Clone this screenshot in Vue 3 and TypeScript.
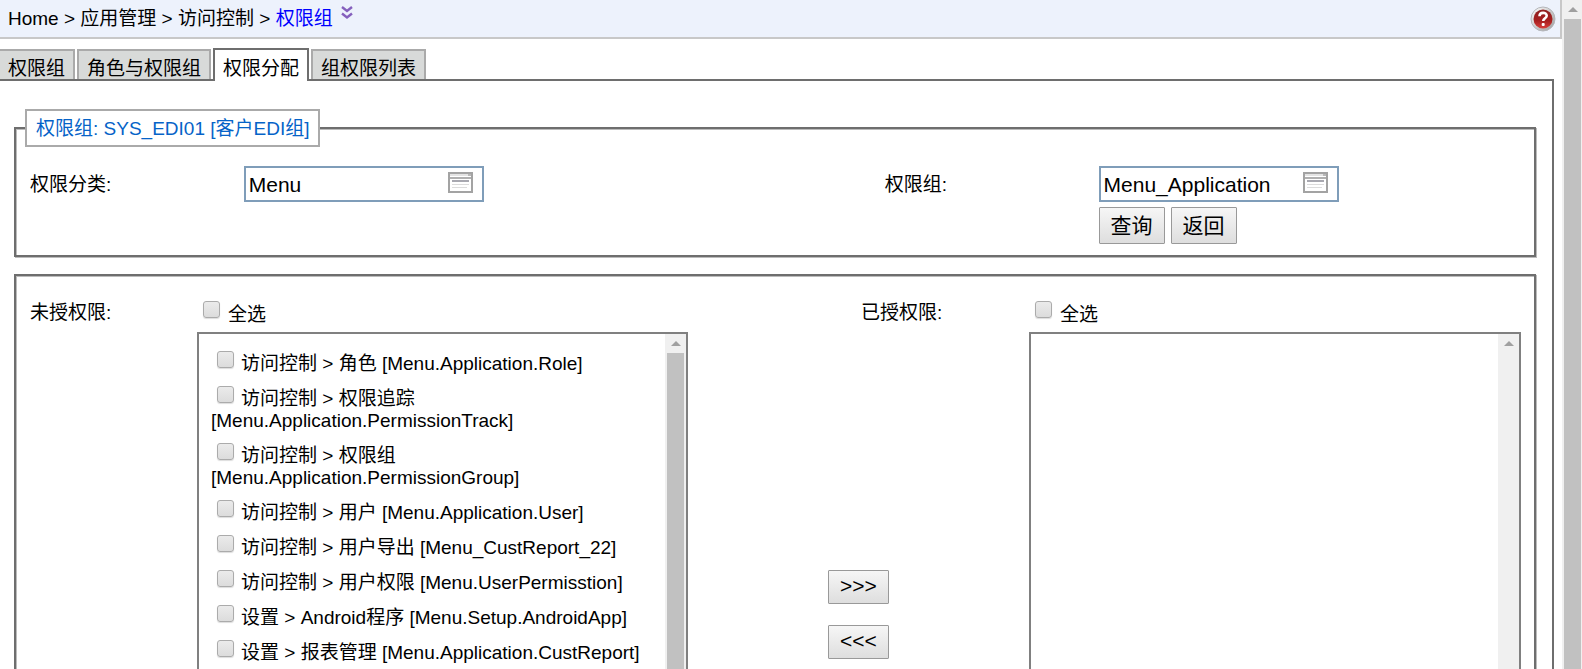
<script setup lang="ts">
import { ref } from 'vue'

interface Permission {
  path: string
  code: string
}

const tabs = ['权限组', '角色与权限组', '权限分配', '组权限列表']
const activeTab = ref('权限分配')
const category = ref('Menu')
const group = ref('Menu_Application')
const checked = ref<string[]>([])

const available: Permission[] = [
  { path: '访问控制 > 角色', code: 'Menu.Application.Role' },
  { path: '访问控制 > 权限追踪', code: 'Menu.Application.PermissionTrack' },
  { path: '访问控制 > 权限组', code: 'Menu.Application.PermissionGroup' },
  { path: '访问控制 > 用户', code: 'Menu.Application.User' },
  { path: '访问控制 > 用户导出', code: 'Menu_CustReport_22' },
  { path: '访问控制 > 用户权限', code: 'Menu.UserPermisstion' },
  { path: '设置 > Android程序', code: 'Menu.Setup.AndroidApp' },
  { path: '设置 > 报表管理', code: 'Menu.Application.CustReport' },
]
</script>

<template>
  <div class="page">
    <div class="view">
      <header class="topbar">
        <nav class="crumbs">
          <span>Home &gt; 应用管理 &gt; 访问控制 &gt; <a href="#">权限组</a></span>
          <button class="more" type="button" aria-label="展开">
            <svg width="12" height="14" viewBox="0 0 12 14" fill="none" stroke="#8560bd" stroke-width="2.400">
              <path d="M1 1l5 4L11 1M1 7.500l5 4 5-4" />
            </svg>
          </button>
        </nav>
        <button class="help" type="button" aria-label="帮助">
          <svg width="26" height="26" viewBox="0 0 26 26">
            <defs>
              <linearGradient id="rim" x1="0" y1="0" x2="1" y2="1">
                <stop offset="0" stop-color="#ffffff" />
                <stop offset="1" stop-color="#9a9a9a" />
              </linearGradient>
              <linearGradient id="disc" x1="0" y1="0" x2="0" y2="1">
                <stop offset="0" stop-color="#8e1f1f" />
                <stop offset="0.6" stop-color="#a82020" />
                <stop offset="1" stop-color="#d9403c" />
              </linearGradient>
            </defs>
            <circle cx="13" cy="13" r="12" fill="url(#rim)" stroke="#b4b6ba" />
            <circle cx="13" cy="13" r="9.500" fill="url(#disc)" />
            <path d="M9.500 10.300c0-4.600 7.200-4.400 7.200-.6 0 2.500-3.500 2.500-3.500 5.300" fill="none" stroke="#fff" stroke-width="2.600" />
            <rect x="11.700" y="17" width="3" height="3" rx="1" fill="#fff" />
          </svg>
        </button>
      </header>

      <nav class="tabs">
        <button
          v-for="tab in tabs"
          :key="tab"
          type="button"
          class="tab"
          :class="{ active: tab === activeTab }"
          @click="activeTab = tab"
        >{{ tab }}</button>
      </nav>

      <main class="content">
        <fieldset class="panel search">
          <legend>权限组: SYS_EDI01 [客户EDI组]</legend>
          <div class="form">
            <label for="category">权限分类:</label>
            <div class="cell">
              <div class="picker">
                <input id="category" v-model="category" type="text" />
                <button type="button" aria-label="选择权限分类">
                  <svg width="25" height="21" viewBox="0 0 25 21" fill="none">
                    <rect x="1" y="1" width="23" height="19" fill="#fff" stroke="#a3a3a3" stroke-width="2" />
                    <path d="M2 3h21" stroke="#e4e4e4" stroke-width="2" />
                    <path d="M2 6h21" stroke="#b0b0b0" stroke-width="2" />
                    <path d="M20 3h3" stroke="#b8b8b8" stroke-width="2" />
                    <path d="M4 9h17" stroke="#a8a8b0" stroke-width="2" />
                    <path d="M4 12.500h17M4 15.500h15" stroke="#dcdcdc" />
                  </svg>
                </button>
              </div>
            </div>
            <label for="group">权限组:</label>
            <div class="cell">
              <div class="picker">
                <input id="group" v-model="group" type="text" />
                <button type="button" aria-label="选择权限组">
                  <svg width="25" height="21" viewBox="0 0 25 21" fill="none">
                    <rect x="1" y="1" width="23" height="19" fill="#fff" stroke="#a3a3a3" stroke-width="2" />
                    <path d="M2 3h21" stroke="#e4e4e4" stroke-width="2" />
                    <path d="M2 6h21" stroke="#b0b0b0" stroke-width="2" />
                    <path d="M20 3h3" stroke="#b8b8b8" stroke-width="2" />
                    <path d="M4 9h17" stroke="#a8a8b0" stroke-width="2" />
                    <path d="M4 12.500h17M4 15.500h15" stroke="#dcdcdc" />
                  </svg>
                </button>
              </div>
              <div class="actions">
                <button class="btn" type="button">查询</button>
                <button class="btn" type="button">返回</button>
              </div>
            </div>
          </div>
        </fieldset>

        <section class="panel assign">
          <span class="side">未授权限:</span>
          <div class="column">
            <label class="all"><input type="checkbox" /><span>全选</span></label>
            <div class="listbox">
              <ul>
                <li v-for="item in available" :key="item.code">
                  <label><input v-model="checked" type="checkbox" :value="item.code" />{{ item.path }} [{{ item.code }}]</label>
                </li>
              </ul>
              <div class="scrollbar">
                <i class="arrow"></i>
                <div class="thumb"></div>
              </div>
            </div>
          </div>
          <div class="moves">
            <button class="btn move" type="button">&gt;&gt;&gt;</button>
            <button class="btn move" type="button">&lt;&lt;&lt;</button>
          </div>
          <span class="side granted">已授权限:</span>
          <div class="column">
            <label class="all"><input type="checkbox" /><span>全选</span></label>
            <div class="listbox">
              <ul></ul>
              <div class="scrollbar">
                <i class="arrow"></i>
              </div>
            </div>
          </div>
        </section>
      </main>
    </div>
    <div class="scrollbar">
      <i class="arrow"></i>
      <div class="thumb"></div>
    </div>
  </div>
</template>

<style>
body {
  margin: 0;
  background: #fff;
}
</style>

<style scoped>
* {
  box-sizing: border-box;
}
.page {
  display: flex;
  height: 100vh;
  overflow: hidden;
  color: #000;
  font: 400 19px/22px "Liberation Sans", Arial, "Noto Sans CJK SC", sans-serif;
}
.view {
  flex: 1;
  min-width: 0;
  overflow: hidden;
}
button {
  font-family: inherit;
  font-weight: inherit;
  color: inherit;
  cursor: pointer;
}
.topbar {
  display: flex;
  align-items: center;
  justify-content: space-between;
  height: 39px;
  padding: 0 4px 0 8px;
  background: #edf2fc;
  border: solid #c8c8c8;
  border-width: 0 2px 2px 0;
}
.crumbs {
  display: flex;
  align-items: flex-start;
  gap: 8px;
  line-height: 26px;
}
.crumbs a {
  color: #00f;
  text-decoration: none;
}
.more,
.help,
.picker button {
  display: flex;
  padding: 0;
  border: 0;
  background: none;
}
.tabs {
  display: flex;
  align-items: flex-end;
  gap: 2px;
  height: 33px;
  margin: 9px 8px 0 0;
  border-bottom: 2px solid #6e6e6e;
}
.tab {
  height: 30px;
  padding: 7px 8px 0;
  border: solid #aaa;
  border-width: 2px 2px 0;
  background: #d8dad9;
  font-size: 19px;
  line-height: 22px;
  white-space: nowrap;
}
.tab:first-child {
  border-left: 0;
}
.tab.active {
  height: 33px;
  margin-bottom: -2px;
  border-color: #6e6e6e;
  background: #fff;
}
.content {
  margin-right: 8px;
  padding: 28px 16px 0 14px;
  border-right: 2px solid #6e6e6e;
}
.panel {
  min-width: 0;
  margin: 0;
  border: 2px solid #6e6e6e;
  box-shadow: 1px 1px 0 #bbb, inset 1px 1px 0 #bbb;
}
.search {
  padding: 19px 8px 11px 14px;
}
legend {
  margin-left: -5px;
  padding: 7px 9px 5px;
  border: 2px solid #aaa;
  background: #fff;
  color: #0563c8;
}
.form {
  display: grid;
  grid-template-columns: 1fr 3fr 1fr 2fr;
}
.form > label {
  padding-top: 8px;
}
.picker {
  display: flex;
  width: 240px;
  height: 36px;
  padding-right: 9px;
  border: 2px solid #7f9db9;
}
.picker input {
  flex: 1;
  min-width: 0;
  padding: 1px 3px 0;
  border: 0;
  outline: 0;
  background: none;
  color: #000;
  font: 21px "Liberation Sans", Arial, sans-serif;
}
.picker button {
  padding-top: 4px;
}
.actions {
  display: flex;
  gap: 6px;
  margin-top: 5px;
}
.btn {
  height: 37px;
  padding: 0 11px;
  border: 1px solid #999;
  border-radius: 1px;
  background: linear-gradient(#f6f6f6, #dedede);
  font-size: 21px;
  line-height: 33px;
}
.assign {
  display: grid;
  grid-template-columns: 167fr 491fr 173fr 168fr 492fr;
  margin-top: 17px;
  padding: 25px 13px 14px 14px;
}
.side {
  padding-top: 1px;
}
.granted {
  grid-area: 1 / 4;
  align-self: start;
}
.column {
  min-width: 0;
}
.all {
  display: flex;
  align-items: flex-start;
  gap: 8px;
  height: 31px;
  padding-left: 6px;
}
.all span {
  padding-top: 3px;
}
input[type='checkbox'] {
  appearance: none;
  width: 17px;
  height: 17px;
  margin: 0;
  border: 1px solid #ababab;
  border-radius: 3px;
  background: linear-gradient(#ebebeb, #dcdcdc);
  box-shadow: 0 1px 1px #ddd;
}
input[type='checkbox']:checked {
  background: #6e6e6e;
}
.listbox {
  display: flex;
  height: 480px;
  border: 2px solid #808080;
}
ul {
  flex: 1;
  min-width: 0;
  margin: 0;
  padding: 12px;
  list-style: none;
}
li {
  padding: 5px 0 6px;
}
li input[type='checkbox'] {
  margin: 0 7px 0 6px;
  vertical-align: 2px;
}
.moves {
  display: flex;
  grid-area: 1 / 3 / 2 / 5;
  flex-direction: column;
  align-items: center;
  gap: 21px;
  padding-top: 269px;
}
.move {
  height: 34px;
  padding-bottom: 3px;
  line-height: 28px;
}
.scrollbar {
  display: flex;
  flex-direction: column;
  align-items: center;
  width: 21px;
  padding: 0 2px;
  background: #f0f0f0;
}
.page > .scrollbar {
  width: 20px;
  padding: 0 1px 0 2px;
}
.arrow {
  margin: 7px 0;
  border: solid transparent;
  border-width: 0 5px 5px;
  border-bottom-color: #a0a0a0;
}
.thumb {
  flex: 1;
  width: 100%;
  background: #c1c1c1;
}
</style>
